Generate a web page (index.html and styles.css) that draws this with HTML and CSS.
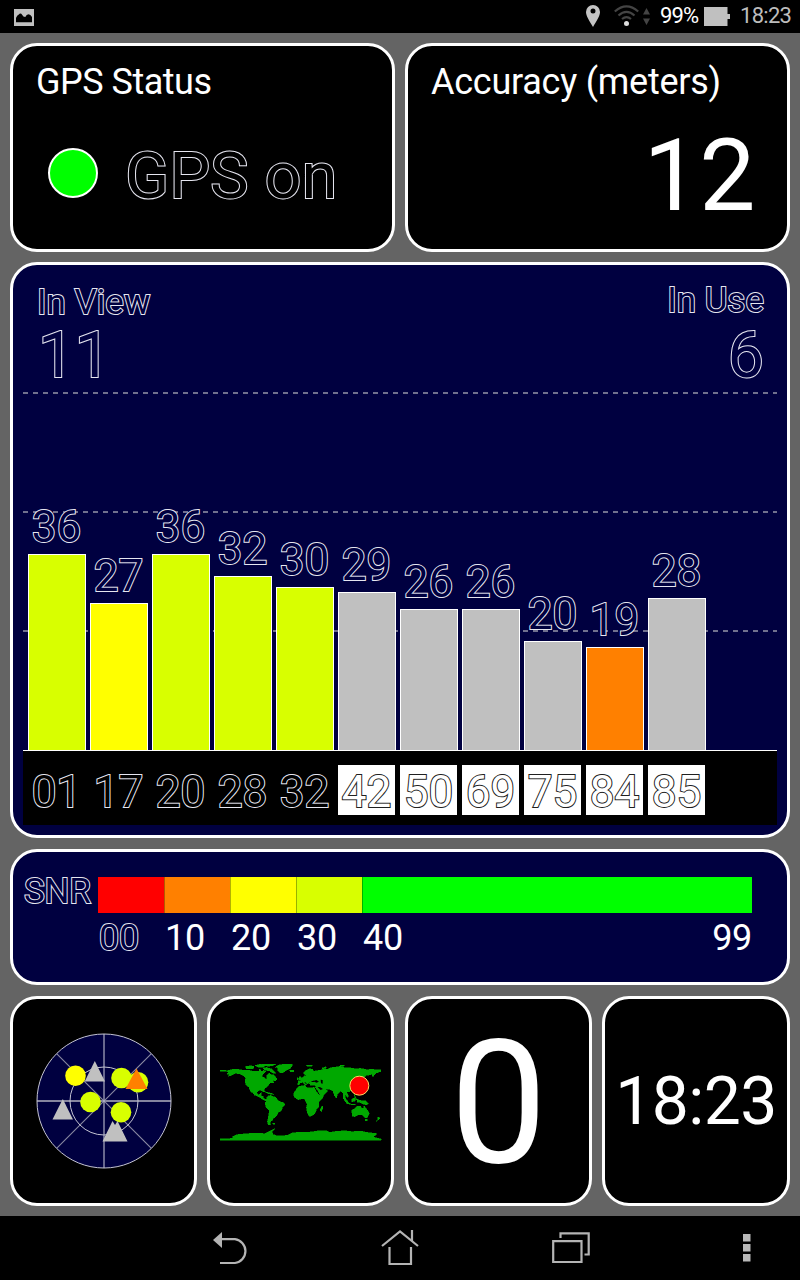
FILE: index.html
```html
<!DOCTYPE html>
<html lang="en">
<head>
<meta charset="utf-8">
<title>GPS Status</title>
<link rel="stylesheet" href="styles.css">
</head>
<body>
<header class="statusbar">
  <svg class="ic-shot" width="20" height="17" viewBox="0 0 20 17"><path fill="#c0c0c0" fill-rule="evenodd" d="M0 0H20V17H0ZM2 13.300H18V8Q16.500 5.300 14.500 5.300Q12.500 5.500 11.300 8Q9 8 8.300 6Q6.500 3.500 4.800 5.500Q3 6 2 9Z"/></svg>
  <div class="status-right">
    <svg class="ic-pin" width="14" height="22" viewBox="0 0 14 22"><path fill="#c4c4c4" fill-rule="evenodd" d="M7 0A7 7 0 0 1 14 7C14 11 10.500 16 7 22C3.500 16 0 11 0 7A7 7 0 0 1 7 0ZM7 3.600A2.500 2.500 0 1 0 7 8.600A2.500 2.500 0 1 0 7 3.600Z"/></svg>
    <svg class="ic-wifi" width="36" height="22" viewBox="0 0 36 22"><g fill="none" stroke="#444" stroke-width="2.200"><path d="M.8 6.500Q12.500-3.800 24.200 6.500"/><path d="M4.500 10.500Q12.500 3.400 20.500 10.500"/><path d="M8 14Q12.500 10.400 17 14"/></g><circle cx="12.500" cy="18.500" r="2.500" fill="#ddd"/><path fill="#444" d="M29 9.500L32.500 3L36 9.500ZM29 13.500H36L32.500 20Z"/></svg>
    <span class="pct">99%</span>
    <svg class="ic-bat" width="26" height="19" viewBox="0 0 26 19"><path fill="#c0c0c0" d="M0 0H23.500V7H26V12H23.500V19H0Z"/></svg>
    <span class="clock">18:23</span>
  </div>
</header>

<main class="board">
  <div class="row top">
    <section class="card">
      <h1 class="title t-status">GPS Status</h1>
      <div class="state"><span class="led"></span><span class="state-text outline on-black">GPS on</span></div>
    </section>
    <section class="card">
      <h1 class="title t-acc">Accuracy (meters)</h1>
      <div class="acc">12</div>
    </section>
  </div>

  <section class="card navy chart">
    <div class="plot">
      <div class="counts">
        <div class="count view"><div class="lbl outline">In View</div><div class="num outline">11</div></div>
        <div class="count use"><div class="lbl outline">In Use</div><div class="num outline">6</div></div>
      </div>
      <div class="bars">
        <div class="col"><span class="snr outline">36</span><i class="bar lime" style="height:196px"></i></div>
        <div class="col"><span class="snr outline">27</span><i class="bar yellow" style="height:147px"></i></div>
        <div class="col"><span class="snr outline">36</span><i class="bar lime" style="height:196px"></i></div>
        <div class="col"><span class="snr outline">32</span><i class="bar lime" style="height:174px"></i></div>
        <div class="col"><span class="snr outline">30</span><i class="bar lime" style="height:163px"></i></div>
        <div class="col"><span class="snr outline">29</span><i class="bar grey" style="height:158px"></i></div>
        <div class="col"><span class="snr outline">26</span><i class="bar grey" style="height:141px"></i></div>
        <div class="col"><span class="snr outline">26</span><i class="bar grey" style="height:141px"></i></div>
        <div class="col"><span class="snr outline">20</span><i class="bar grey" style="height:109px"></i></div>
        <div class="col"><span class="snr outline">19</span><i class="bar orange" style="height:103px"></i></div>
        <div class="col"><span class="snr outline">28</span><i class="bar grey" style="height:152px"></i></div>
      </div>
    </div>
    <div class="prns">
      <span class="prn outline on-black">01</span><span class="prn outline on-black">17</span><span class="prn outline on-black">20</span><span class="prn outline on-black">28</span><span class="prn outline on-black">32</span><span class="prn other">42</span><span class="prn other">50</span><span class="prn other">69</span><span class="prn other">75</span><span class="prn other">84</span><span class="prn other">85</span>
    </div>
  </section>

  <section class="card navy legend">
    <span class="legend-name outline">SNR</span>
    <div class="scale">
      <div class="ramp"><i class="red"></i><i class="orange"></i><i class="yellow"></i><i class="lime"></i><i class="green"></i></div>
      <div class="ticks"><span class="outline">00</span><span>10</span><span>20</span><span>30</span><span>40</span><span class="last">99</span></div>
    </div>
  </section>

  <div class="row bottom">
    <section class="card center">
      <svg class="radar" width="136" height="136" viewBox="-68 -68 136 136">
        <circle r="67" fill="#000040"/>
        <g stroke="#85859f" stroke-width="1.200"><path d="M-47.400-47.400L47.400 47.400M-47.400 47.400L47.400-47.400"/><path d="M-67 0H67" stroke-width="2"/></g>
        <path d="M0-67V67" stroke="#d0d0dc"/>
        <g fill="none" stroke="#c4c4d2"><circle r="67"/><circle r="34"/></g>
        <circle cx="-28.500" cy="-25.300" r="10.300" fill="#ff0"/>
        <g fill="#d8ff00"><circle cx="17.500" cy="-23" r="10.300"/><circle cx="34" cy="-18.800" r="10.300"/><circle cx="-13.500" cy="1" r="10.300"/><circle cx="17" cy="11.300" r="10.300"/></g>
        <g fill="#c0c0c0"><path d="M-9.200-40L1-19.500H-19.300Z"/><path d="M-41.200-2L-31 18.500H-51.500Z"/><path d="M8.500 20L11 24L13.500 20L23.500 40.500H-1.500Z"/></g>
        <path fill="#ff8000" d="M32.500-32.500L43.500-12H21.500Z"/>
      </svg>
    </section>
    <section class="card center">
      <svg class="map" width="162" height="78" viewBox="29 40 486 234">
        <g fill="#00a800" stroke="#00a800" stroke-width="1.500" shape-rendering="crispEdges">
          <path d="M30 61H46V65H30ZM50 74L54 67L48 64L62 60L75 58L95 61L112 61L130 65L146 64L148 57L154 66L160 62L166 65L162 71L155 76L156 82L164 84L167 90L170 86L169 76L178 71L184 76L188 74L200 87L193 91L188 93L190 99L180 99L172 109L162 118L160 128L156 123L146 122L139 128L142 135L149 134L151 129L154 130L151 138L158 140L160 147L169 149L166 153L154 147L143 140L132 136L123 120L126 130L122 127L116 113L107 106L104 94L106 85L98 77L86 72L75 71L64 77L52 80L60 75Z"/>
          <path d="M104 51L122 48L132 51L128 58L108 57ZM134 47L150 44L164 47L160 52H142ZM158 56L168 53L184 58L197 70L188 71L178 64L163 61ZM150 45L172 43L198 43L186 48L175 50ZM194 53L206 46L222 43L246 43L245 50L239 57L229 61L217 70L208 69L202 62L203 54ZM238 62H250V66H240ZM158 124L173 129L183 131L190 134L180 134L168 129ZM189 87L199 89L196 94L188 91Z"/>
          <path d="M169 143L175 138L181 137L190 141L198 144L204 154L222 160L224 166L216 174L213 184L203 188L200 196L192 205L187 206L188 210L181 215L179 224L183 226L174 225L171 217L174 203L177 183L168 174L164 161L168 154Z"/>
          <path d="M187 221H193V223H187Z"/>
          <path d="M251 131L258 118L264 111L276 108L285 107L286 112L296 115L312 113L318 126L328 137L340 136L337 145L325 157L326 171L318 179L315 190L306 198L296 200L291 188L288 174L291 163L286 157L284 149L276 147L263 150L252 142L249 136ZM331 174L338 168L337 176L333 186L330 182Z"/>
          <path d="M263 101V94L271 93L267 89L277 84L281 79L288 77L283 75L279 70L286 62L299 57L309 60L308 65L326 62L336 60L343 57L349 59L362 54L376 52L391 50L404 54L419 54L436 58L450 56L469 60L486 59L511 61V66L497 70L491 77L488 82L485 74L475 76L466 77L465 82L452 81L447 88L445 105L430 110L426 119L417 127L409 126L413 136L413 143L408 140L403 134L407 149L415 158L410 160L398 146L399 132L392 124L387 128L381 133L379 145L373 140L368 124L357 119L346 119L352 124L344 133L330 138L321 121L315 114L317 108L300 106L296 99L304 97L316 98L310 92L300 96L292 103L285 98L279 96L289 106L284 105L276 98L269 100L266 105L259 104Z"/>
          <path d="M269 80L275 87L268 91L265 86ZM260 84H264V90H260ZM288 46L306 46V49L290 50ZM335 55L348 51V54L336 59ZM390 46H402V50H390ZM403 151L416 160L423 163L434 163V166L417 164L408 160ZM424 149L435 143L434 154L425 156ZM431 134L436 144L441 151L437 150ZM440 149L452 153L467 154L474 162L466 166L450 159L440 157Z"/>
          <path d="M424 181L434 176L440 170L450 169L453 175L459 176L461 168L466 175L473 183L477 191L471 204L463 204L456 196L445 195L434 201L426 200ZM464 209H470V213H464ZM503 202L509 206L504 211L497 215L502 209Z"/>
          <path d="M29 272V268L70 266L66 262L78 255L108 252L137 250L163 252L177 245L191 238L195 237L185 245L188 254L198 258L207 259L230 257L244 250L270 247L300 247L326 243L350 243L356 248L379 245L403 243L424 246L451 244L475 249L500 252L489 262L513 268V272Z"/>
        </g>
        <g fill="#000"><path d="M309 94L318 91L326 96L318 99ZM331 90L337 91L337 102L332 101ZM322 113L331 121L338 118L330 113L326 112Z"/></g>
        <circle cx="447" cy="108" r="28.500" fill="#f00" stroke="#ffd860" stroke-width="3"/>
      </svg>
    </section>
    <section class="card center speed">0</section>
    <section class="card center time">18:23</section>
  </div>
</main>

<nav class="navbar">
  <svg class="nav-back" width="36" height="33" viewBox="0 0 36 33"><path fill="#b4b4b4" d="M0 8L9 0V16Z"/><path d="M8 7.200H22A12 12 0 0 1 22 31H7" fill="none" stroke="#b4b4b4" stroke-width="2.200"/></svg>
  <svg class="nav-home" width="38" height="36" viewBox="0 0 38 36"><path d="M1 16L19 1.500L37 16M31 11V0M8.500 17V34H30V17" fill="none" stroke="#b4b4b4" stroke-width="2.200"/></svg>
  <svg class="nav-recent" width="38" height="32" viewBox="0 0 38 32"><path d="M1.200 9.200H29.500V30H1.200ZM8.500 6V1.300H36.700V22.500H32.500" fill="none" stroke="#b4b4b4" stroke-width="2.200"/></svg>
  <svg class="nav-menu" width="8" height="28" viewBox="0 0 8 28"><path fill="#b8b8b8" d="M0 0H7.500V7.500H0ZM0 10H7.500V17.500H0ZM0 20H7.500V27.500H0Z"/></svg>
</nav>
</body>
</html>
```
FILE: styles.css
```css
* { box-sizing: border-box; }
body {
  margin: 0;
  width: 800px;
  height: 1280px;
  overflow: hidden;
  display: flex;
  flex-direction: column;
  background: #646464;
  color: #fff;
  font-family: Roboto, "Liberation Sans", sans-serif;
}
svg { display: block; flex: none; }
.statusbar {
  flex: none;
  height: 33px;
  padding: 0 8px 0 14px;
  background: #000;
  display: flex;
  justify-content: space-between;
}
.ic-shot { margin-top: 9px; }
.status-right { display: flex; font-size: 22px; line-height: 32px; }
.ic-pin { margin: 5px 14px 0 0; }
.ic-wifi { margin: 5px 10px 0 0; }
.pct { width: 44px; letter-spacing: -.9px; }
.ic-bat { margin: 7px 10px 0 0; }
.clock { width: 52px; letter-spacing: -.7px; color: #bdbdbd; white-space: nowrap; }

.board { flex: none; height: 1183px; padding: 10px 10px 0; display: flex; flex-direction: column; }
.row { display: grid; gap: 10px; }
.top { grid-template-columns: 1fr 1fr; height: 209px; }
.bottom { grid-template-columns: 187px 187px 187px 188px; column-gap: 10.330px; height: 210px; margin-top: 11px; }
.card { border: 3px solid #fff; border-radius: 27px; background: #000; overflow: hidden; }
.navy { background: #000040; }
.title { margin: 0; padding: 18px 0 0 23px; font-size: 36px; line-height: 36px; font-weight: 400; white-space: nowrap; }
.t-status { letter-spacing: -.5px; }
.t-acc { letter-spacing: -.25px; }
/* The fill is painted over the stroke so that only the outer contour shows. */
.outline { color: #000040; -webkit-text-stroke: 2px #e6e6f0; paint-order: stroke fill; }
.on-black { color: #000; }
.state { display: flex; margin-top: 42px; padding-left: 35px; }
.led { width: 50px; height: 50px; margin-top: 6px; border: 2px solid #fff; border-radius: 50%; background: #0f0; }
.state-text { margin: 1px 0 0 27px; font-size: 65px; line-height: 66px; letter-spacing: -.1px; white-space: nowrap; }
.acc { margin-top: 26px; padding-right: 32px; text-align: right; font-size: 100px; line-height: 100px; letter-spacing: -.5px; }

.chart { height: 576px; margin-top: 10px; padding: 0 10px; }
.plot {
  height: 486px;
  border-bottom: 1px solid #fff;
  display: flex;
  flex-direction: column;
  background:
    repeating-linear-gradient(90deg, #70708e 0 5px, transparent 5px 10px) 0 127px / 100% 2px no-repeat,
    repeating-linear-gradient(90deg, #70708e 0 5px, transparent 5px 10px) 0 246px / 100% 2px no-repeat,
    repeating-linear-gradient(90deg, #70708e 0 5px, transparent 5px 10px) 0 365px / 100% 2px no-repeat;
}
.counts { display: flex; justify-content: space-between; padding: 0 13px 0 14px; height: 127px; }
.lbl { font-size: 35px; line-height: 36px; }
.num { font-size: 65px; line-height: 66px; }
.view .lbl { margin-top: 20px; }
.view .num { margin-top: 1px; padding-left: 1px; }
.use { text-align: right; }
.use .lbl { margin-top: 18px; }
.use .num { margin-top: 3px; }
.bars { flex: 1; display: flex; align-items: flex-end; gap: 4px; padding-left: 5px; }
.col { width: 58px; display: flex; flex-direction: column; align-items: center; }
.snr { font-size: 44px; line-height: 44px; margin: 0 1px 5px 0; }
.bar { width: 58px; border: 1px solid #fff; border-bottom: 0; }
.lime { background: #d8ff00; }
.yellow { background: #ff0; }
.grey { background: #c0c0c0; }
.orange { background: #ff8000; }
.red { background: #f00; }
.green { background: #0f0; }
.prns { height: 74px; background: #000; padding: 14px 0 0 5px; display: flex; gap: 5px; }
.prn { width: 57px; height: 50px; text-align: center; font-size: 44px; line-height: 55px; }
.other { background: #fff; color: #fff; -webkit-text-stroke: 2px #202020; paint-order: stroke fill; }

.legend { flex: none; height: 136px; margin-top: 11px; padding: 25px 35px 0 11px; display: flex; }
.legend-name { width: 74px; font-size: 35px; line-height: 30px; letter-spacing: -.2px; }
.scale { flex: 1; font-size: 36px; }
.ramp { display: grid; grid-template-columns: 66px 66px 66px 66px 1fr; height: 36px; }
.ramp i + i { border-left: 1px solid rgba(0, 0, 0, .3); }
.ticks { display: grid; grid-template-columns: 66px 66px 66px 66px 66px 1fr; line-height: 36px; margin: 7px 0 0 1px; letter-spacing: -.3px; }
.last { text-align: right; }

.center { display: flex; align-items: center; justify-content: center; }
.map { margin-top: 2px; }
.speed { font-size: 173px; line-height: 173px; padding: 5px 0 0 1px; }
.time { font-size: 66px; line-height: 66px; padding: 1px 0 0 0; letter-spacing: -.6px; white-space: nowrap; }

.navbar { flex: 1; background: #000; padding-left: 213px; display: flex; align-items: flex-start; }
.nav-back { margin-top: 16px; }
.nav-home { margin: 14px 0 0 132px; }
.nav-recent { margin: 16px 0 0 133px; }
.nav-menu { margin: 18px 0 0 153px; }
```
